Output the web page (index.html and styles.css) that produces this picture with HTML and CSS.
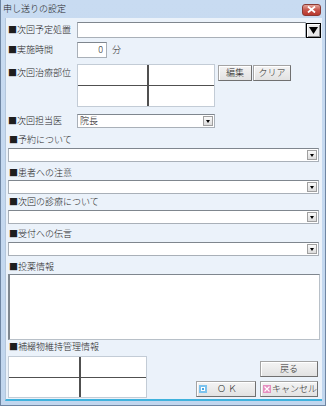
FILE: index.html
```html
<!DOCTYPE html>
<html lang="ja">

<head>
    <meta charset="UTF-8">
    <title>申し送りの設定</title>
    <link rel="stylesheet" href="styles.css">
</head>

<body>
    <div class="window">
        <div class="titlebar">
            <span class="title">申し送りの設定</span>
            <span class="close">
                <svg width="9" height="7" viewBox="0 0 9 7"><path d="M1 0.5 L8 6.5 M8 0.5 L1 6.5" stroke="#fff" stroke-width="1.8"/></svg>
            </span>
        </div>
        <div class="client">
            <div class="row r1">
                <span class="lbl">■次回予定処置</span>
                <div class="field wide1"></div>
                <span class="bigbtn">
                    <svg width="9" height="7" viewBox="0 0 9 7"><path d="M0 0 H9 L4.5 7 Z" fill="#000"/></svg>
                </span>
            </div>
            <div class="row r2">
                <span class="lbl">■実施時間</span>
                <div class="field num">0</div>
                <span class="unit">分</span>
            </div>
            <div class="row r3">
                <span class="lbl top">■次回治療部位</span>
                <div class="quad q1">
                    <div></div><div></div><div></div><div></div>
                </div>
                <span class="btn edit">編集</span>
                <span class="btn clear">クリア</span>
            </div>
            <div class="row r4">
                <span class="lbl">■次回担当医</span>
                <div class="combo short">
                    <span class="value">院長</span>
                    <span class="arrow"></span>
                </div>
            </div>

            <div class="head h1">■予約について</div>
            <div class="combo full s1"><span class="value"></span><span class="arrow"></span></div>

            <div class="head h2">■患者への注意</div>
            <div class="combo full s2"><span class="value"></span><span class="arrow"></span></div>

            <div class="head h3">■次回の診療について</div>
            <div class="combo full s3"><span class="value"></span><span class="arrow"></span></div>

            <div class="head h4">■受付への伝言</div>
            <div class="combo full s4"><span class="value"></span><span class="arrow"></span></div>

            <div class="head h5">■投薬情報</div>
            <div class="memo"></div>

            <div class="head h6">■補綴物維持管理情報</div>
            <div class="bottom">
                <div class="quad q2">
                    <div></div><div></div><div></div><div></div>
                </div>
                <div class="actions">
                    <span class="btn back">戻る</span>
                    <div class="pair">
                        <span class="btn ok"><i class="ico ico-ok"></i><span>Ｏ Ｋ</span></span>
                        <span class="btn cancel"><i class="ico ico-cancel">
                            <svg width="6" height="6" viewBox="0 0 6 6"><path d="M0.5 0.5 L5.5 5.5 M5.5 0.5 L0.5 5.5" stroke="#fff" stroke-width="1.2"/></svg>
                        </i><span>キャンセル</span></span>
                    </div>
                </div>
            </div>
        </div>
    </div>
</body>

</html>
```

FILE: styles.css
```css
body {
    margin: 0;
    padding: 0;
    font-family: "Noto Sans CJK JP", "Liberation Sans", sans-serif;
    font-size: 9px;
    font-weight: 300;
    color: #1e1e1e;
    background-color: #c9dcf0;
}

.window {
    width: 324px;
    height: 405px;
    border: 1px solid #6f86a3;
    border-top: none;
    background: linear-gradient(#c8dbf1, #c1d6ee);
    display: flex;
    flex-direction: column;
}

.titlebar {
    height: 18px;
    display: flex;
    align-items: center;
    justify-content: space-between;
    padding: 0 4px 0 2px;
}

.title {
    line-height: 12px;
    margin-top: -1px;
}

.close {
    width: 19px;
    height: 12px;
    margin-top: 1px;
    border: 1px solid #8a3a34;
    border-radius: 3px;
    background: linear-gradient(#e3a59a, #c7544a 50%, #b8392f);
    display: flex;
    align-items: center;
    justify-content: center;
    box-sizing: border-box;
}

.client {
    margin: 0 3px 0 4px;
    height: 383px;
    background-color: #ebf2fa;
    border-left: 1px solid #b4c7dc;
    border-bottom: 2px solid #3fb2dd;
    box-sizing: border-box;
    display: flex;
    flex-direction: column;
    padding-left: 1px;
}

.row {
    display: flex;
    align-items: center;
}

.r1 { margin-top: 4px; height: 16px; }
.r2 { margin-top: 4px; height: 16px; }
.r3 { margin-top: 6px; height: 43px; align-items: flex-start; }
.r4 { margin-top: 7px; height: 14px; }

.lbl {
    width: 69px;
    padding-left: 1px;
    line-height: 12px;
    white-space: nowrap;
}

.lbl.top {
    margin-top: 3px;
}

.field {
    height: 16px;
    box-sizing: border-box;
    background-color: #fff;
    border: 1px solid #a9b0b8;
    border-top-color: #7f868e;
}

.wide1 {
    width: 229px;
}

.bigbtn {
    width: 15px;
    height: 15px;
    box-sizing: border-box;
    border: 1px solid #000;
    box-shadow: inset 1px 1px 0 #fff, inset -1px -1px 0 #8a8a8a;
    background-color: #e8e8e8;
    display: flex;
    align-items: center;
    justify-content: center;
}

.num {
    width: 30px;
    text-align: right;
    padding-right: 3px;
    line-height: 14px;
}

.unit {
    margin-left: 5px;
    line-height: 12px;
}

.quad {
    display: grid;
    grid-template-columns: 1fr 1fr;
    grid-template-rows: 1fr 1fr;
    gap: 1px 2px;
    background-color: #505050;
    border: 1px solid #c3ccd6;
    box-sizing: border-box;
}

.quad div {
    background-color: #fff;
}

.q1 {
    width: 138px;
    height: 43px;
    grid-template-columns: 69px 1fr;
}

.btn {
    height: 16px;
    box-sizing: border-box;
    border: 1px solid #a4a4a4;
    border-right-color: #707070;
    border-bottom-color: #707070;
    box-shadow: inset 1px 1px 0 #fff;
    background: linear-gradient(#f4f4f4, #e2e2e2);
    display: flex;
    align-items: center;
    justify-content: center;
    line-height: 12px;
}

.edit {
    width: 34px;
    margin-left: 3px;
    margin-top: 1px;
}

.clear {
    width: 38px;
    margin-left: 1px;
    margin-top: 1px;
}

.combo {
    height: 14px;
    box-sizing: border-box;
    background-color: #fff;
    border: 1px solid #a9b0b8;
    border-top-color: #7f868e;
    display: flex;
    align-items: center;
}

.combo .value {
    flex: 1;
    padding-left: 2px;
    line-height: 12px;
}

.combo .arrow {
    width: 10px;
    height: 10px;
    margin-right: 1px;
    box-sizing: border-box;
    border: 1px solid #a0a0a0;
    background: linear-gradient(#fafafa, #dcdcdc);
    display: flex;
    align-items: center;
    justify-content: center;
}

.combo .arrow::after {
    content: "";
    border-left: 2.5px solid transparent;
    border-right: 2.5px solid transparent;
    border-top: 3px solid #000;
    margin-top: 1px;
}

.short {
    width: 138px;
}

.full {
    width: 311px;
    margin-left: 1px;
}

.head {
    height: 12px;
    line-height: 12px;
    padding-left: 2px;
    white-space: nowrap;
}

.h1 { margin-top: 6px; }
.s1 { margin-top: 2px; }
.h2 { margin-top: 5px; }
.s2 { margin-top: 1px; }
.h3 { margin-top: 2px; }
.s3 { margin-top: 2px; }
.h4 { margin-top: 4px; }
.s4 { margin-top: 2px; }
.h5 { margin-top: 5px; }
.h6 { margin-top: 1px; }

.memo {
    margin-top: 1px;
    margin-left: 1px;
    width: 312px;
    height: 66px;
    box-sizing: border-box;
    background-color: #fff;
    border: 1px solid #b8c0c8;
    border-left: 2px solid #808890;
    border-top-color: #7f868e;
}

.bottom {
    margin-top: 3px;
    display: flex;
    align-items: flex-start;
}

.q2 {
    width: 139px;
    height: 42px;
    margin-left: 1px;
    grid-template-columns: 70px 1fr;
}

.actions {
    margin-left: auto;
    margin-right: 4px;
    display: flex;
    flex-direction: column;
    align-items: flex-end;
}

.back {
    width: 58px;
    margin-top: 5px;
}

.pair {
    display: flex;
    margin-top: 4px;
    gap: 4px;
}

.ok {
    width: 60px;
    justify-content: flex-start;
    padding-left: 2px;
    gap: 10px;
}

.cancel {
    width: 58px;
    justify-content: flex-start;
    padding-left: 2px;
    gap: 1px;
}

.ico {
    width: 8px;
    height: 8px;
    box-sizing: border-box;
    display: flex;
    align-items: center;
    justify-content: center;
}

.ico-ok {
    background-color: #4aa6e0;
    border: 2px solid #7cc3ee;
    box-shadow: inset 0 0 0 1px #fff;
}

.ico-cancel {
    background-color: #e58fc0;
}
```
